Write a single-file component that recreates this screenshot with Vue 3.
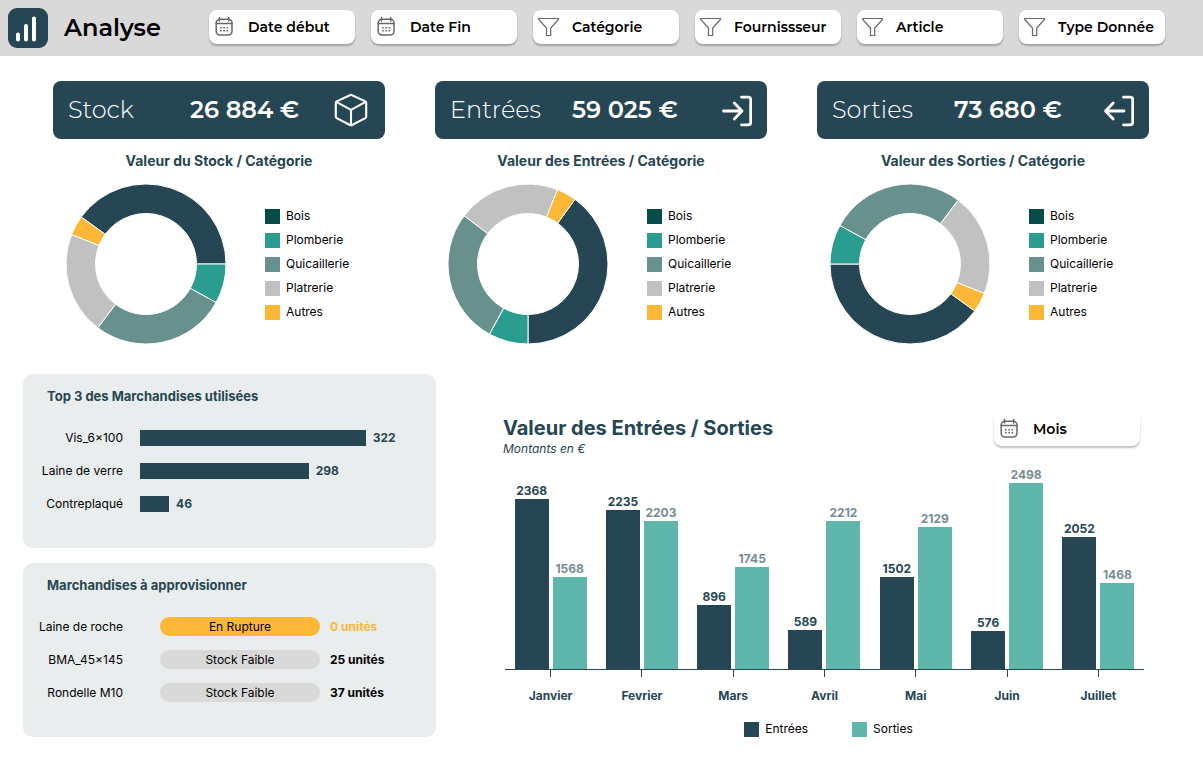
<script setup>
const filters = [
  { label: 'Date début', icon: 'calendar' },
  { label: 'Date Fin', icon: 'calendar' },
  { label: 'Catégorie', icon: 'funnel' },
  { label: 'Fournissseur', icon: 'funnel' },
  { label: 'Article', icon: 'funnel' },
  { label: 'Type Donnée', icon: 'funnel' },
]

const categories = [
  { name: 'Bois', key: 'bois', share: 40 },
  { name: 'Plomberie', key: 'plomberie', share: 8 },
  { name: 'Quicaillerie', key: 'quincaillerie', share: 27.3 },
  { name: 'Platrerie', key: 'platrerie', share: 20.7 },
  { name: 'Autres', key: 'autres', share: 4 },
]

const kpis = [
  { label: 'Stock', value: '26 884 €', icon: 'box', chart: 'Valeur du Stock / Catégorie', start: 216 },
  { label: 'Entrées', value: '59 025 €', icon: 'enter', chart: 'Valeur des Entrées / Catégorie', start: 306 },
  { label: 'Sorties', value: '73 680 €', icon: 'exit', chart: 'Valeur des Sorties / Catégorie', start: 36 },
]

function point(radius, degrees) {
  const a = (degrees * Math.PI) / 180
  return `${(81 + radius * Math.cos(a)).toFixed(2)} ${(81 + radius * Math.sin(a)).toFixed(2)}`
}

// Ring slices, clockwise from the start angle
function slices(start) {
  let from = start
  return categories.map((c) => {
    const sweep = c.share * 3.6
    const to = from + sweep
    const large = sweep > 180 ? 1 : 0
    const d = `M${point(80, from)} A80 80 0 ${large} 1 ${point(80, to)} L${point(50.5, to)} A50.5 50.5 0 ${large} 0 ${point(50.5, from)} Z`
    from = to
    return { key: c.key, d }
  })
}

const topItems = [
  { name: 'Vis_6×100', value: 322, width: 83 },
  { name: 'Laine de verre', value: 298, width: 62 },
  { name: 'Contreplaqué', value: 46, width: 10.7 },
]

const restock = [
  { name: 'Laine de roche', status: 'En Rupture', units: '0 unités', out: true },
  { name: 'BMA_45×145', status: 'Stock Faible', units: '25 unités', out: false },
  { name: 'Rondelle M10', status: 'Stock Faible', units: '37 unités', out: false },
]

// inH / outH: bar heights as a percentage of the plot
const months = [
  { name: 'Janvier', in: 2368, out: 1568, inH: 80.3, outH: 43.6 },
  { name: 'Fevrier', in: 2235, out: 2203, inH: 75, outH: 69.6 },
  { name: 'Mars', in: 896, out: 1745, inH: 30, outH: 48.3 },
  { name: 'Avril', in: 589, out: 2212, inH: 18.5, outH: 70 },
  { name: 'Mai', in: 1502, out: 2129, inH: 43.6, outH: 67.1 },
  { name: 'Juin', in: 576, out: 2498, inH: 18, outH: 87.8 },
  { name: 'Juillet', in: 2052, out: 1468, inH: 62.2, outH: 40.6 },
]
</script>

<template>
  <div class="page">
    <header class="topbar">
      <svg class="logo" viewBox="0 0 40 40" aria-hidden="true">
        <rect width="40" height="40" rx="9" />
        <path d="M10 26.5V31.5M18 18V31.5M26 10.5V31.5" />
      </svg>
      <h1>Analyse</h1>
      <nav class="filters" aria-label="Filtres">
        <button v-for="f in filters" :key="f.label" type="button" class="filter">
          <svg v-if="f.icon === 'calendar'" class="filter-icon" viewBox="0 0 24 24" aria-hidden="true">
            <rect x="2.2" y="4.2" width="15.8" height="15.8" rx="3.8" />
            <path d="M2.2 8.6H18M5.5 2.4V6M14.7 2.4V6" />
            <path class="dots" d="M6.1 12.7H14.1M6.1 15.8H14.1" />
          </svg>
          <svg v-else class="filter-icon funnel" viewBox="0 0 24 24" aria-hidden="true">
            <path d="M.7 3.5H20.5V4.5L12.7 13V20.5H8.5V13L.7 4.5Z" />
          </svg>
          {{ f.label }}
        </button>
      </nav>
    </header>

    <main>
      <div class="kpis">
        <section v-for="k in kpis" :key="k.label">
          <div class="kpi">
            <span class="kpi-label">{{ k.label }}</span>
            <strong class="kpi-value">{{ k.value }}</strong>
            <svg v-if="k.icon === 'box'" class="kpi-icon box" viewBox="0 0 36 36" aria-hidden="true">
              <path d="M15.9 3.2Q17 2.6 18.1 3.2L31.3 9.4Q32.2 9.9 32.2 11V24.5Q32.2 25.6 31.3 26.1L18.1 33Q17 33.6 15.9 33L2.7 26.1Q1.8 25.6 1.8 24.5V11Q1.8 9.9 2.7 9.4Z" />
              <path d="M2.3 9.9L17 17.8L31.7 9.9M17 17.8V33" />
            </svg>
            <svg v-else-if="k.icon === 'enter'" class="kpi-icon" viewBox="0 0 36 36" aria-hidden="true">
              <path d="M7.5 19H26M18.3 11L26 19L18.3 27" />
              <path d="M25.5 5.2H32.2Q34.7 5.2 34.7 7.7V30.3Q34.7 32.8 32.2 32.8H25.5" />
            </svg>
            <svg v-else class="kpi-icon" viewBox="0 0 36 36" aria-hidden="true">
              <path d="M26 19H7.5M15.2 11L7.5 19L15.2 27" />
              <path d="M25.5 5.2H32.2Q34.7 5.2 34.7 7.7V30.3Q34.7 32.8 32.2 32.8H25.5" />
            </svg>
          </div>
          <h2 class="donut-title">{{ k.chart }}</h2>
          <div class="donut-row">
            <svg class="donut" viewBox="0 0 162 162" role="img" :aria-label="k.chart">
              <path v-for="s in slices(k.start)" :key="s.key" :d="s.d" :class="s.key" />
            </svg>
            <ul class="legend">
              <li v-for="c in categories" :key="c.key">
                <span class="swatch" :class="c.key"></span>{{ c.name }}
              </li>
            </ul>
          </div>
        </section>
      </div>

      <div class="lower">
        <div class="panels">
          <section class="panel">
            <h2>Top 3 des Marchandises utilisées</h2>
            <ul>
              <li v-for="t in topItems" :key="t.name" class="item">
                <span class="item-name">{{ t.name }}</span>
                <span class="track">
                  <span class="hbar" :style="{ width: t.width + '%' }"></span>
                  <b>{{ t.value }}</b>
                </span>
              </li>
            </ul>
          </section>
          <section class="panel">
            <h2>Marchandises à approvisionner</h2>
            <ul>
              <li v-for="r in restock" :key="r.name" class="item stock" :class="{ out: r.out }">
                <span class="item-name">{{ r.name }}</span>
                <span class="pill">{{ r.status }}</span>
                <b>{{ r.units }}</b>
              </li>
            </ul>
          </section>
        </div>

        <section class="chart">
          <div class="chart-head">
            <div class="chart-titles">
              <h2>Valeur des Entrées / Sorties</h2>
              <p>Montants en €</p>
            </div>
            <button type="button" class="filter period">
              <svg class="filter-icon" viewBox="0 0 24 24" aria-hidden="true">
                <rect x="2.2" y="4.2" width="15.8" height="15.8" rx="3.8" />
                <path d="M2.2 8.6H18M5.5 2.4V6M14.7 2.4V6" />
                <path class="dots" d="M6.1 12.7H14.1M6.1 15.8H14.1" />
              </svg>
              Mois
            </button>
          </div>
          <div class="plot">
            <div v-for="m in months" :key="m.name" class="group">
              <div class="bar in" :style="{ height: m.inH + '%' }"><span>{{ m.in }}</span></div>
              <div class="bar outgoing" :style="{ height: m.outH + '%' }"><span>{{ m.out }}</span></div>
            </div>
          </div>
          <div class="axis">
            <span v-for="m in months" :key="m.name">{{ m.name }}</span>
          </div>
          <ul class="chart-legend">
            <li><span class="swatch in"></span>Entrées</li>
            <li><span class="swatch outgoing"></span>Sorties</li>
          </ul>
        </section>
      </div>
    </main>
  </div>
</template>

<style>
body {
  margin: 0;
  background: #fff;
}
</style>

<style scoped>
.page {
  font: 12px/16px Inter, "Liberation Sans", sans-serif;
  color: #000;
}
h1, h2, p, ul {
  margin: 0;
  padding: 0;
}
ul {
  list-style: none;
}
h2 {
  color: #264653;
  font-weight: 700;
}

.topbar {
  display: grid;
  grid-template-columns: 40px 129px 1fr;
  align-items: center;
  gap: 16px;
  height: 56px;
  padding: 0 38px 0 8px;
  box-sizing: border-box;
  background: #d9d9d9;
}
.logo {
  width: 40px;
  height: 40px;
}
.logo rect {
  fill: #264653;
}
.logo path {
  stroke: #fff;
  stroke-width: 4;
  stroke-linecap: round;
}
h1 {
  font: 600 24px/32px Montserrat, Inter, sans-serif;
}
.filters {
  display: grid;
  grid-template-columns: repeat(6, 1fr);
  gap: 16px;
  padding-bottom: 2px;
}
.filter {
  display: flex;
  align-items: center;
  gap: 10px;
  height: 34px;
  padding: 0 0 0 5px;
  border: 0;
  border-radius: 8px;
  background: #fff;
  box-shadow: 0 2px 2px rgba(0, 0, 0, 0.25);
  color: #000;
  font: 600 14px/20px Montserrat, Inter, sans-serif;
  white-space: nowrap;
  cursor: pointer;
}
.filter-icon {
  flex: none;
  width: 24px;
  height: 24px;
  fill: none;
  stroke: #686868;
  stroke-width: 1.5;
  stroke-linecap: round;
}
.filter-icon.funnel {
  stroke-width: 1.2;
  stroke-linecap: butt;
}
.filter-icon .dots {
  stroke-linecap: butt;
  stroke-dasharray: 1.6 1.6;
}

.kpis {
  display: grid;
  grid-template-columns: repeat(3, 1fr);
  gap: 50px;
  padding: 25px 54px 0 53px;
}
.kpi {
  display: grid;
  grid-template-columns: 122px 1fr 36px;
  align-items: center;
  height: 58px;
  padding: 0 15px;
  border-radius: 8px;
  background: #264653;
  color: #fff;
  white-space: nowrap;
}
.kpi-label {
  font: 300 24px/32px Montserrat, Inter, sans-serif;
}
.kpi-value {
  font: 600 24px/32px Montserrat, Inter, sans-serif;
}
.kpi-icon {
  width: 36px;
  height: 36px;
  fill: none;
  stroke: #fff;
  stroke-width: 2.8;
  stroke-linecap: round;
  stroke-linejoin: round;
}
.kpi-icon.box {
  stroke-width: 2.1;
}
.donut-title {
  margin: 12px 0;
  font-size: 14px;
  line-height: 20px;
  text-align: center;
}
.donut-row {
  display: flex;
  align-items: center;
  gap: 38px;
  padding-left: 12px;
}
.donut {
  flex: none;
  width: 162px;
  height: 162px;
  stroke: #fff;
  stroke-width: 1;
}
.donut .bois { fill: #264653; }
.donut .plomberie { fill: #2a9d90; }
.donut .quincaillerie { fill: #68918e; }
.donut .platrerie { fill: #c1c1c1; }
.donut .autres { fill: #fcb737; }
.swatch.bois { background: #064d47; }
.swatch.plomberie { background: #2a9d90; }
.swatch.quincaillerie { background: #68918e; }
.swatch.platrerie { background: #c1c1c1; }
.swatch.autres { background: #fcb737; }
.legend li {
  display: flex;
  align-items: center;
  gap: 6px;
  height: 24px;
}
.swatch {
  flex: none;
  width: 15px;
  height: 15px;
}

.lower {
  display: grid;
  grid-template-columns: 413fr 641fr;
  gap: 67px;
  padding: 29px 59px 20px 23px;
}
.panels {
  display: grid;
  align-content: start;
  gap: 15px;
}
.panel {
  padding: 12px 24px 28px 0;
  border-radius: 10px;
  background: #e9eded;
}
.panel h2 {
  margin: 0 0 15px 24px;
  font-size: 13px;
  line-height: 20px;
}
.item {
  display: grid;
  grid-template-columns: 100px 1fr;
  align-items: center;
  column-gap: 17px;
  height: 33px;
}
.item-name {
  text-align: right;
}
.track {
  display: flex;
  align-items: center;
  gap: 7px;
  color: #264653;
}
.hbar {
  flex: none;
  height: 16px;
  background: #264653;
}
.item.stock {
  grid-template-columns: 127px 160px 1fr;
  column-gap: 10px;
}
.item.stock .item-name {
  padding-right: 27px;
}
.pill {
  padding: 2px 0 1px;
  border-radius: 10px;
  background: #d9d9d9;
  text-align: center;
}
.out .pill {
  background: #fcb737;
}
.out b {
  color: #fcb737;
}

.chart {
  padding-top: 38px;
}
.chart-head {
  display: flex;
  justify-content: space-between;
  align-items: flex-start;
  padding-right: 4px;
}
.chart-titles {
  padding-top: 3px;
}
.chart-titles h2 {
  font-size: 20px;
  line-height: 26px;
}
.chart-titles p {
  color: #264653;
  font-style: italic;
}
.period {
  width: 146px;
}
.plot {
  display: grid;
  grid-template-columns: repeat(7, 1fr);
  height: 212px;
  margin-left: 2px;
  border-bottom: 1px solid #264653;
}
.group {
  display: flex;
  justify-content: center;
  align-items: flex-end;
  gap: 4px;
}
.bar {
  display: flex;
  justify-content: center;
  width: 34px;
}
.bar span {
  height: 16px;
  margin-top: -16px;
  color: #264653;
  font-weight: 700;
}
.bar.outgoing span {
  color: #768d96;
}
.in { background: #264653; }
.outgoing { background: #5fb6aa; }
.axis {
  display: grid;
  grid-template-columns: repeat(7, 1fr);
  margin-left: 2px;
  color: #264653;
  font-weight: 700;
}
.axis span {
  display: flex;
  flex-direction: column;
  align-items: center;
  gap: 11px;
}
.axis span::before {
  content: "";
  width: 1px;
  height: 7px;
  background: #264653;
}
.chart-legend {
  display: flex;
  justify-content: center;
  gap: 44px;
  margin-top: 17px;
  padding-left: 10px;
}
.chart-legend li {
  display: flex;
  align-items: center;
  gap: 6px;
}
</style>
